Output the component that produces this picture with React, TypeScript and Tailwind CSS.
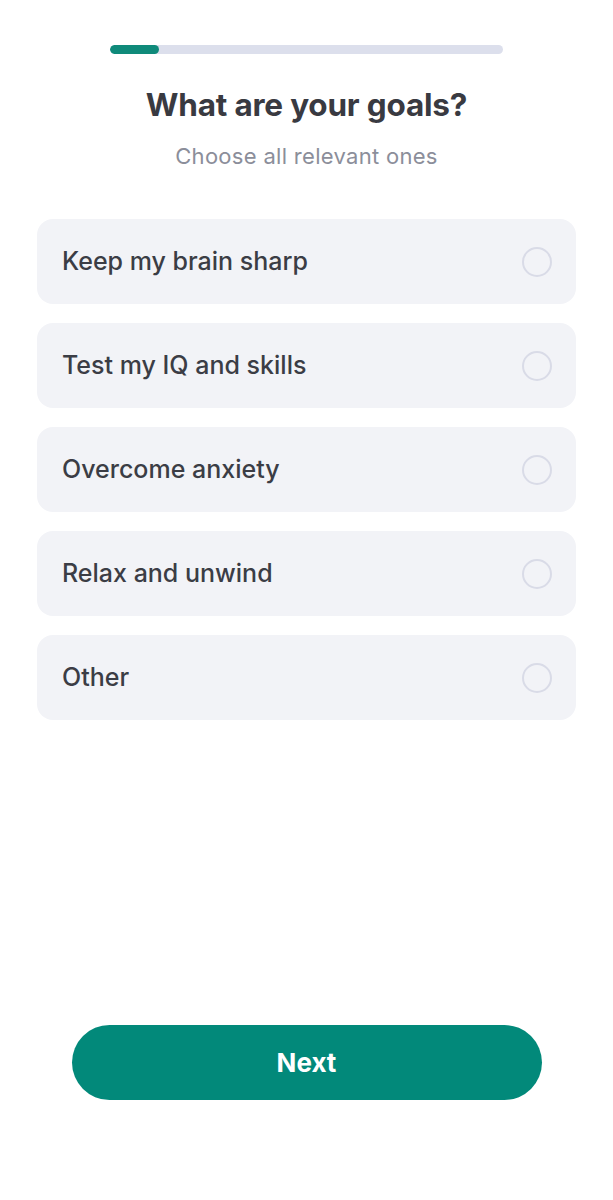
import React from "react";

const goals = [
  "Keep my brain sharp",
  "Test my IQ and skills",
  "Overcome anxiety",
  "Relax and unwind",
  "Other",
];

export default function App() {
  return (
    <div
      className="w-[613px] h-[1200px] bg-white flex flex-col items-center"
      style={{ fontFamily: "Inter, 'Noto Sans', sans-serif" }}
    >
      <div className="mt-[45px] w-[393px] h-[9px] rounded-full bg-[#dcdfec] overflow-hidden">
        <div className="w-[49px] h-full rounded-full bg-[#0f8a7a]" />
      </div>
      <h1 className="mt-[32px] text-[31.5px] leading-[38px] font-bold text-[#393a41] tracking-[-0.2px]">
        What are your goals?
      </h1>
      <p className="mt-[18px] text-[22px] leading-[28px] tracking-[0.3px] text-[#8b8e9a]">
        Choose all relevant ones
      </p>
      <div className="mt-[49px] w-[539px] flex flex-col gap-[19px]">
        {goals.map((g) => (
          <div
            key={g}
            className="h-[85px] rounded-[16px] bg-[#f2f3f7] flex items-center justify-between pl-[25px] pr-[24px]"
          >
            <span className="text-[25px] font-medium text-[#3b3d45]">{g}</span>
            <div className="w-[30px] h-[30px] rounded-full border-2 border-[#d9dbe7]" />
          </div>
        ))}
      </div>
      <div className="flex-1" />
      <button className="mb-[100px] w-[470px] h-[75px] rounded-full bg-[#02897a] text-white text-[26px] font-bold">
        Next
      </button>
    </div>
  );
}
